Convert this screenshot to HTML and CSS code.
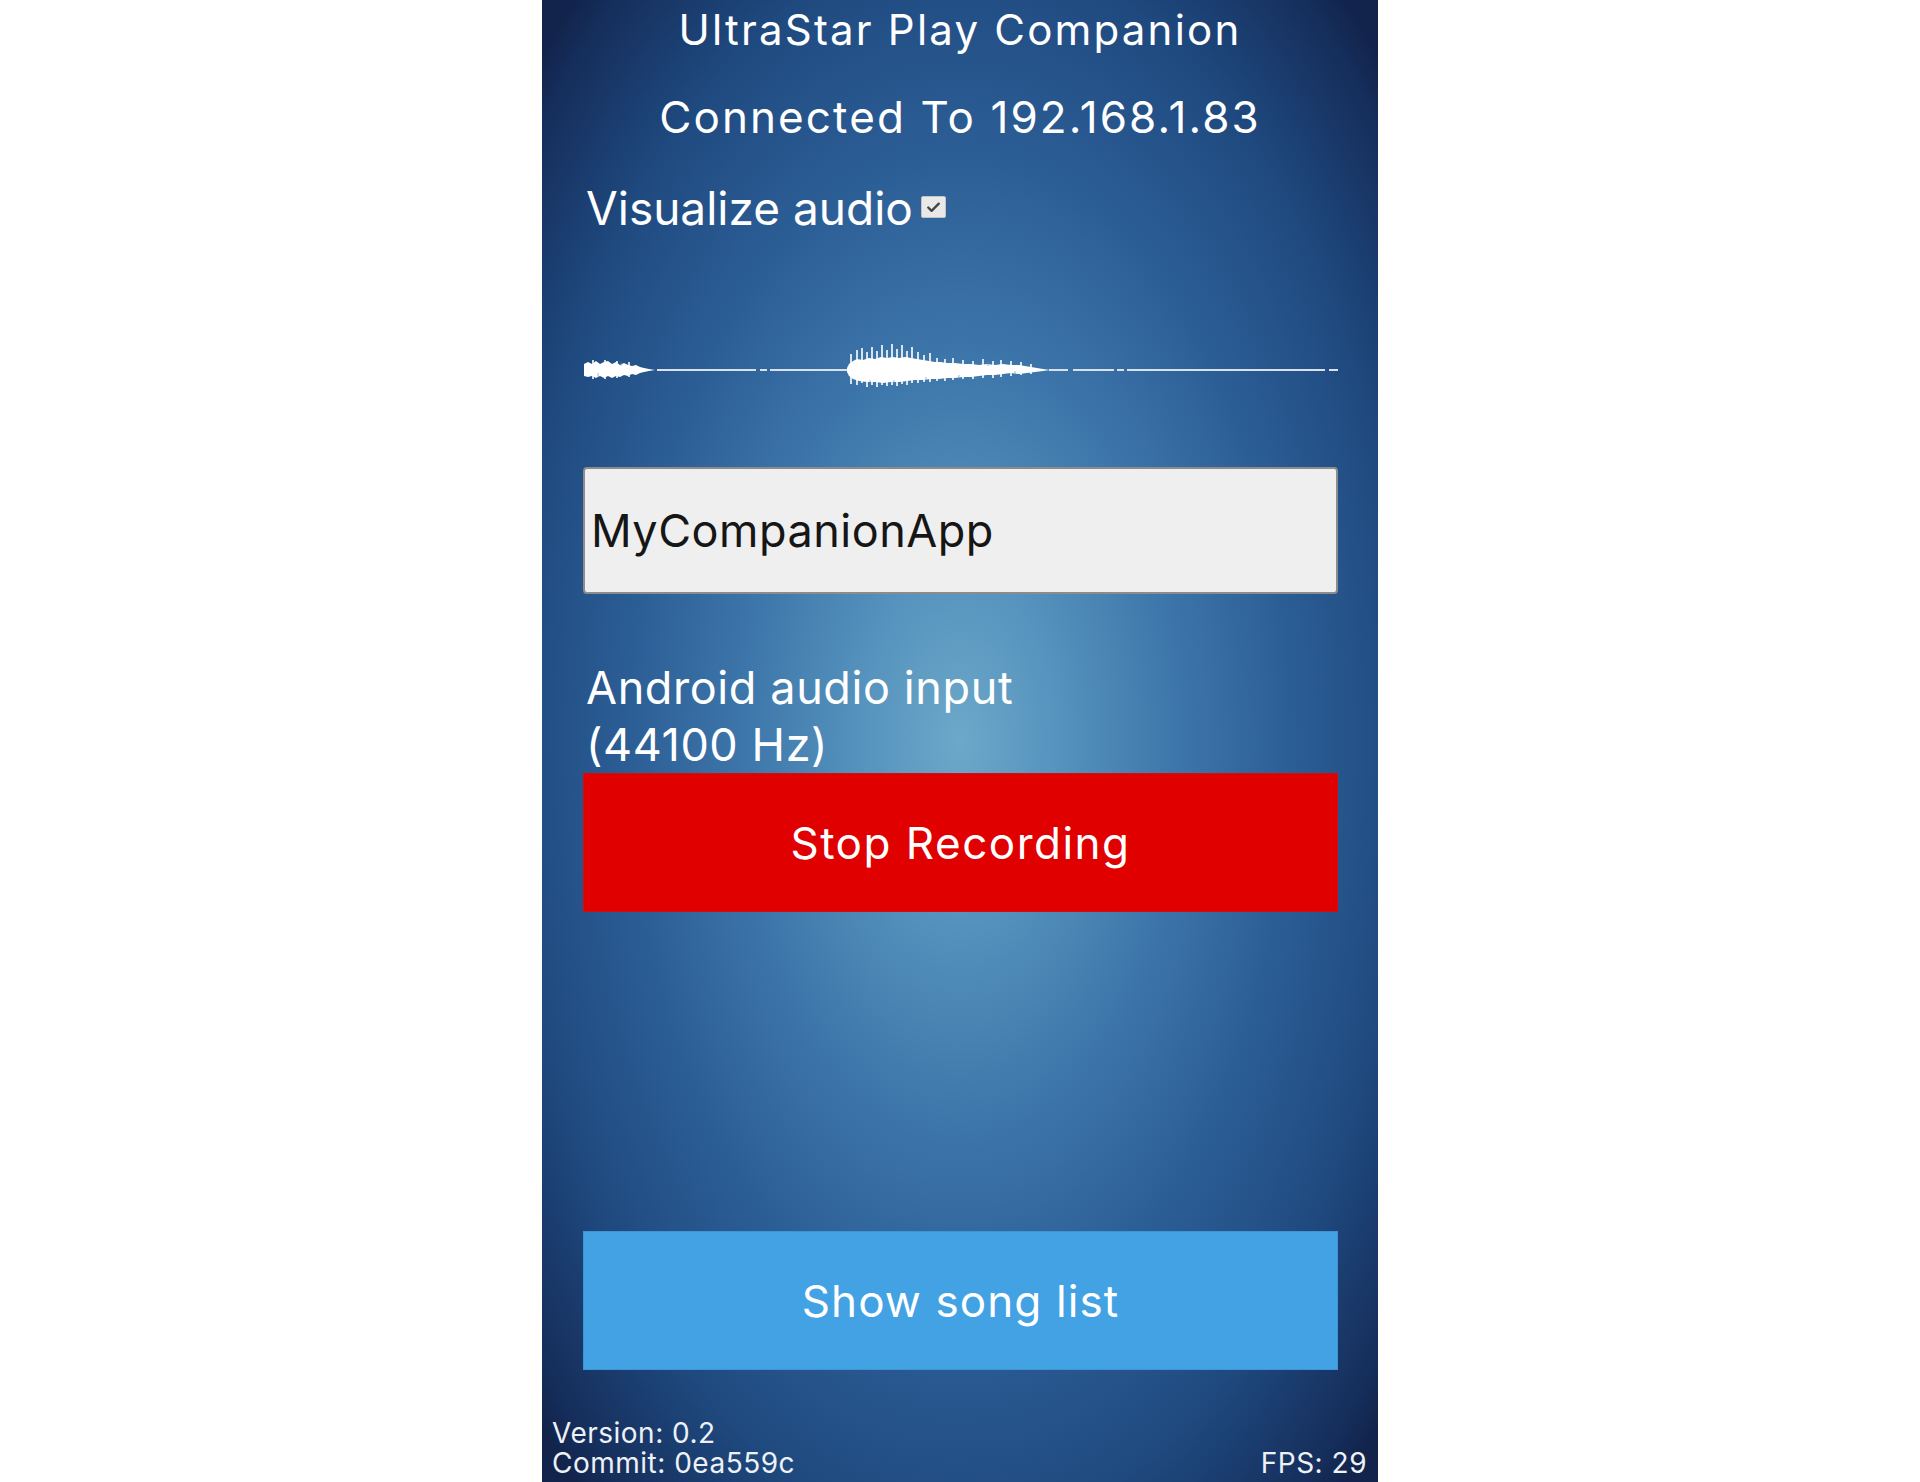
FILE: index.html
```html
<!doctype html>
<html>
<head>
<meta charset=utf-8>
<title>UltraStar Play Companion</title>
<link rel="stylesheet" href="styles.css">
</head>

<body>

<div class="screen">

  <h1 class="title">UltraStar Play Companion</h1>
  <p class="connection">Connected To 192.168.1.83</p>

  <label class="toggle">
    <span>Visualize audio</span>
    <span class="checkbox">
      <svg viewBox="0 0 24 22" width="24" height="22"><path d="M6.5 11.5 L10 15 L17.5 7.5" fill="none" stroke="#444" stroke-width="2.4" stroke-linecap="round" stroke-linejoin="round"/></svg>
    </span>
  </label>

  <svg class="waveform" viewBox="0 0 755 60" width="755" height="60">
    <g stroke="#d9e2ec" stroke-width="2">
      <line x1="74" y1="30" x2="173" y2="30"/>
      <line x1="177" y1="30" x2="184" y2="30"/>
      <line x1="187" y1="30" x2="265" y2="30"/>
      <line x1="466" y1="30" x2="485" y2="30"/>
      <line x1="490" y1="30" x2="531" y2="30"/>
      <line x1="534" y1="30" x2="541" y2="30"/>
      <line x1="544" y1="30" x2="742" y2="30"/>
      <line x1="746" y1="30" x2="755" y2="30"/>
    </g>
    <path fill="#fff" d="M1 24 L5 22 L9 24 L13 21 L17 24 L21 22 L25 21 L29 24 L33 22 L37 25 L41 23 L45 25 L49 26 L53 25 L57 27 L61 28 L66 29 L72 30 L66 31 L61 32 L57 33 L53 35 L49 34 L45 36 L41 35 L37 37 L33 36 L29 38 L25 36 L21 38 L17 36 L13 38 L9 36 L5 37 L1 36 Z"/>
    <path fill="#fff" d="M264 28 L266 24 L270 21 L274 19 L280 20 L286 18 L292 19 L298 17 L304 18 L310 17 L316 18 L322 17 L328 18 L334 19 L340 20 L346 21 L352 22 L358 22 L364 23 L372 23 L380 24 L388 24 L396 25 L404 24 L412 25 L420 24 L428 25 L436 25 L442 26 L448 27 L454 28 L460 29 L467 30 L460 31 L452 32 L444 33 L436 34 L428 33 L420 34 L412 35 L404 35 L396 36 L388 37 L380 37 L372 38 L364 38 L356 39 L348 39 L340 40 L332 40 L324 41 L316 42 L308 42 L300 43 L292 42 L284 42 L276 41 L270 39 L266 36 L264 32 Z"/>
    <g stroke="#fff" stroke-width="1.6">
      <line x1="268" y1="14" x2="268" y2="44"/>
      <line x1="274" y1="10" x2="274" y2="45"/>
      <line x1="279" y1="8" x2="279" y2="43"/>
      <line x1="284" y1="12" x2="284" y2="47"/>
      <line x1="289" y1="7" x2="289" y2="45"/>
      <line x1="294" y1="11" x2="294" y2="47"/>
      <line x1="299" y1="5" x2="299" y2="45"/>
      <line x1="304" y1="10" x2="304" y2="46"/>
      <line x1="309" y1="4" x2="309" y2="45"/>
      <line x1="314" y1="9" x2="314" y2="46"/>
      <line x1="319" y1="5" x2="319" y2="44"/>
      <line x1="324" y1="11" x2="324" y2="45"/>
      <line x1="329" y1="7" x2="329" y2="43"/>
      <line x1="335" y1="12" x2="335" y2="43"/>
      <line x1="341" y1="15" x2="341" y2="42"/>
      <line x1="347" y1="13" x2="347" y2="42"/>
      <line x1="354" y1="18" x2="354" y2="41"/>
      <line x1="362" y1="19" x2="362" y2="41"/>
      <line x1="370" y1="18" x2="370" y2="40"/>
      <line x1="380" y1="20" x2="380" y2="39"/>
      <line x1="390" y1="21" x2="390" y2="39"/>
      <line x1="400" y1="19" x2="400" y2="38"/>
      <line x1="410" y1="21" x2="410" y2="38"/>
      <line x1="418" y1="20" x2="418" y2="37"/>
      <line x1="428" y1="21" x2="428" y2="36"/>
      <line x1="438" y1="22" x2="438" y2="35"/>
      <line x1="448" y1="24" x2="448" y2="34"/>
      <line x1="10" y1="20" x2="10" y2="39"/>
      <line x1="22" y1="20" x2="22" y2="39"/>
      <line x1="34" y1="21" x2="34" y2="38"/>
      <line x1="46" y1="22" x2="46" y2="37"/>
    </g>
    <g stroke="#5d8fbd" stroke-width="1" opacity="0.6">
      <line x1="287" y1="40" x2="287" y2="44"/>
      <line x1="311" y1="40" x2="311" y2="44"/>
      <line x1="343" y1="37" x2="343" y2="41"/>
      <line x1="376" y1="35" x2="376" y2="39"/>
      <line x1="405" y1="22" x2="405" y2="26"/>
      <line x1="432" y1="31" x2="432" y2="35"/>
      <line x1="15" y1="33" x2="15" y2="37"/>
      <line x1="38" y1="22" x2="38" y2="26"/>
    </g>
  </svg>

  <div class="name-field">MyCompanionApp</div>

  <p class="mic-label">Android audio input<br>(44100 Hz)</p>
  <button class="record-button">Stop Recording</button>

  <div class="spacer"></div>

  <button class="song-list-button">Show song list</button>

  <footer>
    <div class="build-info">
      <div>Version: 0.2</div>
      <div>Commit: 0ea559c</div>
    </div>
    <div class="fps">FPS: 29</div>
  </footer>

</div>

</body>
</html>
```

FILE: styles.css
```css
body {
  margin: 0;
  padding: 0;
  background: #fff;
  font-family: "Inter", "Noto Sans", sans-serif;
}

.screen {
  width: 836px;
  height: 1482px;
  margin: 0 auto;
  display: flex;
  flex-direction: column;
  color: #fff;
  background: radial-gradient(ellipse 68% 68% at 50% 50%, #6ca8c9 0%, #5592bd 18%, #3d76aa 38%, #2c5e96 58%, #1f4a80 78%, #152d5a 96%, #12244c 100%);
  overflow: hidden;
}

.title {
  margin: 5px 0 0;
  font-size: 42px;
  font-weight: 400;
  line-height: 1.2;
  letter-spacing: 2.2px;
  text-align: center;
}

.connection {
  margin: 36px 0 0;
  font-size: 44px;
  line-height: 1.2;
  letter-spacing: 2.1px;
  text-align: center;
}

.toggle {
  display: flex;
  align-items: flex-start;
  margin: 37px 0 0 44px;
  font-size: 46px;
  line-height: 1.2;
}

.checkbox {
  width: 25px;
  height: 22px;
  margin: 15px 0 0 8px;
  background: #e9e9e9;
  border: 1px solid #c4c4c4;
  border-radius: 2px;
  box-sizing: border-box;
  display: flex;
  align-items: center;
  justify-content: center;
}

.waveform {
  display: block;
  margin: 104px 0 0 41px;
}

.name-field {
  margin: 67px 0 0 41px;
  width: 755px;
  height: 127px;
  box-sizing: border-box;
  display: flex;
  align-items: center;
  padding-left: 6px;
  background: #efefef;
  border: 2px solid #8c8c8c;
  border-radius: 4px;
  color: #161616;
  font-size: 45px;
  letter-spacing: 0.5px;
}

.mic-label {
  margin: 65px 0 0 44px;
  font-size: 45px;
  line-height: 57px;
  letter-spacing: 0.6px;
}

.record-button,
.song-list-button {
  display: block;
  margin: 0 0 0 41px;
  width: 755px;
  height: 139px;
  border: 1px solid transparent;
  color: #fff;
  font-family: inherit;
  font-size: 44px;
  padding: 0;
}

.record-button {
  background: #e00000;
  border-color: #d01010;
  letter-spacing: 1.5px;
}

.spacer {
  flex: 1;
}

.song-list-button {
  background: #42a2e4;
  border-color: #3d95d6;
  letter-spacing: 1.1px;
}

footer {
  display: flex;
  justify-content: space-between;
  align-items: flex-end;
  margin-top: 48px;
  padding: 0 11px 4px 10px;
  font-size: 28px;
  line-height: 30px;
  letter-spacing: 0.5px;
  color: #eef1f5;
}
```
